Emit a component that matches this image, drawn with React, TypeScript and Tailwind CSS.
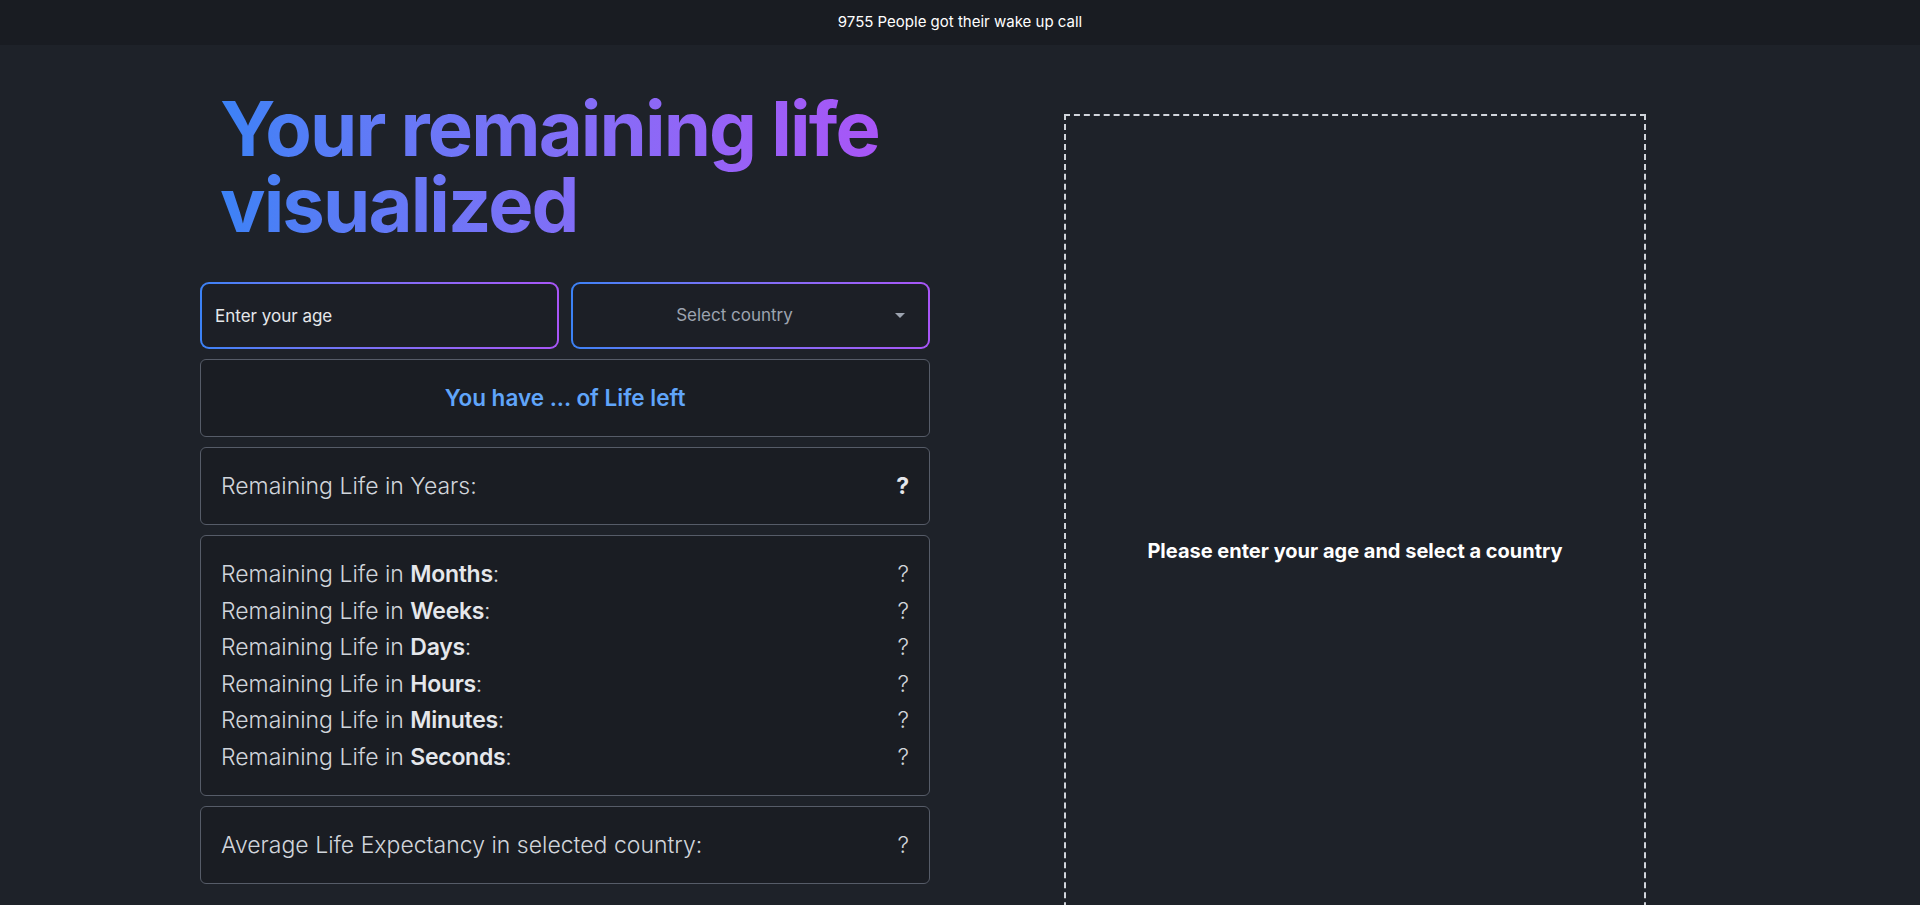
import React from 'react';

const units = ['Months', 'Weeks', 'Days', 'Hours', 'Minutes', 'Seconds'];

function GradientBox({ children }: { children: React.ReactNode }) {
    return (
        <div className="flex-1 rounded-[9px] bg-linear-to-r from-[#3b82f6] to-[#a855f7] p-[2px]">
            <div className="h-[63px] rounded-[7px] bg-[#1c1f26] flex items-center">{children}</div>
        </div>
    );
}

export default function App() {
    return (
        <div className="min-h-screen bg-[#1e2229] font-['Inter',sans-serif] text-[#d1d5db] overflow-hidden">
            {/* Banner */}
            <div className="h-[45px] bg-[#191c22] flex items-center justify-center text-[15px] text-white">
                9755 People got their wake up call
            </div>

            <div className="flex pl-[200px] gap-[134px]">
                {/* Left column */}
                <div className="w-[730px] shrink-0">
                    <h1 className="mt-[45px] ml-5 w-fit text-[76px] leading-none font-bold tracking-tight bg-linear-to-r from-[#3b82f6] to-[#a855f7] bg-clip-text text-transparent">
                        Your remaining life
                        <br />
                        visualized
                    </h1>

                    <div className="mt-10 flex gap-3">
                        <GradientBox>
                            <input
                                type="text"
                                placeholder="Enter your age"
                                className="w-full h-full bg-transparent px-[13px] text-[17px] text-[#e5e7eb] placeholder:text-[#e5e7eb] outline-none"
                            />
                        </GradientBox>
                        <GradientBox>
                            <div className="relative w-full pr-8 flex items-center justify-center text-[17px] text-[#9ca3af]">
                                Select country
                                <svg className="absolute right-[23px]" width="10" height="6" viewBox="0 0 10 6">
                                    <path d="M0 0 L10 0 L5 5 Z" fill="#9ca3af" />
                                </svg>
                            </div>
                        </GradientBox>
                    </div>

                    <div className="mt-[10px] rounded-md border border-[#565c68] bg-[#1a1d23] py-6 text-center text-[22.5px] leading-7 font-semibold text-[#60a5fa]">
                        You have ... of Life left
                    </div>

                    <div className="mt-[10px] rounded-md border border-[#565c68] bg-[#1a1d23] px-5 py-6 flex justify-between text-[23px] leading-7 font-light">
                        <span>Remaining Life in Years:</span>
                        <span className="font-bold text-[#e5e7eb]">?</span>
                    </div>

                    <div className="mt-[10px] rounded-md border border-[#565c68] bg-[#1a1d23] px-5 py-5 text-[23px] font-light">
                        {units.map((u) => (
                            <div key={u} className="h-[36.5px] flex items-center justify-between">
                                <span>
                                    Remaining Life in <span className="font-semibold text-[#e5e7eb] tracking-[-0.3px]">{u}</span>:
                                </span>
                                <span>?</span>
                            </div>
                        ))}
                    </div>

                    <div className="mt-[10px] rounded-md border border-[#565c68] bg-[#1a1d23] px-5 py-6 flex justify-between text-[23px] leading-7 font-light">
                        <span>Average Life Expectancy in selected country:</span>
                        <span>?</span>
                    </div>
                </div>

                {/* Right column */}
                <div className="mt-[69px] w-[582px] h-[874px] shrink-0 border-2 border-dashed border-[#d1d5db] flex items-center justify-center">
                    <p className="text-xl font-bold text-white">Please enter your age and select a country</p>
                </div>
            </div>
        </div>
    );
}
